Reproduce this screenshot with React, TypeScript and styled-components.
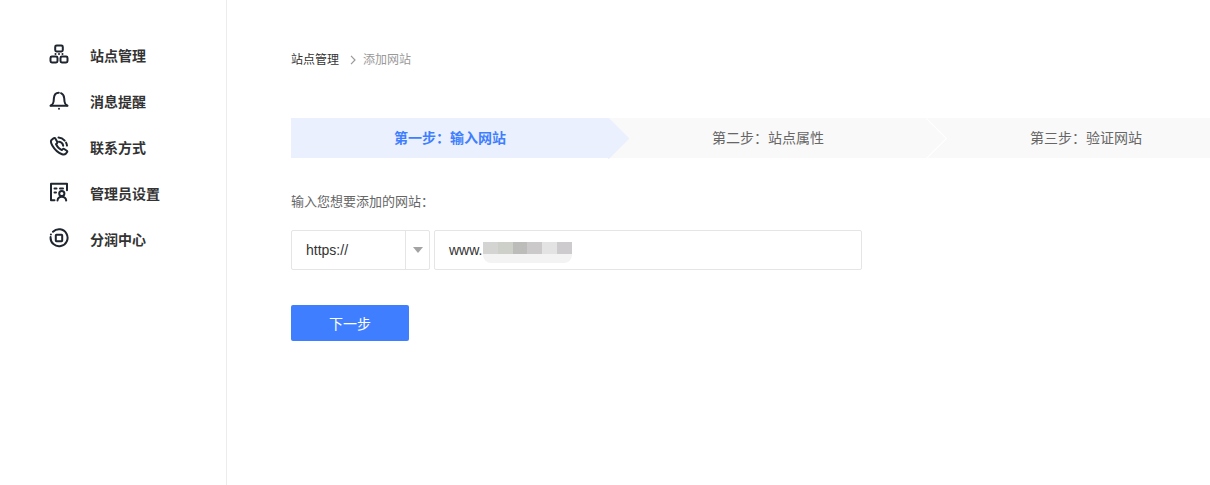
import React from 'react'
import styled, { createGlobalStyle } from 'styled-components'

// constants
const FONT = '"Liberation Sans", "Noto Sans CJK SC", sans-serif'
const BLUE = '#3f7fff'
const BLUR_CELLS = ['#d4d4d2', '#cdd0c8', '#bcbcba', '#cbc9ca', '#e3e3e3', '#cdcbcd']

// styled components
const GlobalStyle = createGlobalStyle`
  html, body {
    margin: 0;
    padding: 0;
    background: #fff;
    overflow: hidden;
  }
  * {
    box-sizing: border-box;
  }
`

const Page = styled.div`
  display: flex;
  width: 1210px;
  height: 485px;
  overflow: hidden;
  font-family: ${FONT};
`

const Sidebar = styled.nav`
  flex: 0 0 227px;
  display: flex;
  flex-direction: column;
  padding-top: 32px;
  padding-left: 49px;
  border-right: 1px solid #ececec;
`

const MenuItem = styled.div`
  height: 46px;
  display: flex;
  align-items: center;
  gap: 21px;
  color: #333;
  font-size: 14px;
  font-weight: 700;
`

const MenuIcon = styled.svg`
  flex-shrink: 0;
  width: 20px;
  height: 20px;
  margin-top: -2px;
  fill: none;
  stroke: #1f2630;
  stroke-width: 2;
  stroke-linecap: round;
  stroke-linejoin: round;
`

const Main = styled.main`
  flex: 1;
  min-width: 0;
  padding-left: 64px;
  padding-top: 51px;
`

const Breadcrumb = styled.div`
  height: 18px;
  display: flex;
  align-items: center;
  font-size: 12px;
  line-height: 18px;
  color: #333;
`

const Chevron = styled.svg`
  width: 8px;
  height: 10px;
  margin: 0 6px 0 10px;
  fill: none;
  stroke: #9a9a9a;
  stroke-width: 1.2;
`

const Current = styled.span`
  color: #999;
`

const Steps = styled.div`
  display: flex;
  margin-top: 49px;
  width: 954px;
`

const Step = styled.div<{ $active?: boolean }>`
  position: relative;
  flex: 0 0 318px;
  height: 40px;
  display: flex;
  align-items: center;
  justify-content: center;
  padding-bottom: 2px;
  font-size: 14px;
  font-weight: ${({ $active }) => ($active ? 700 : 400)};
  color: ${({ $active }) => ($active ? BLUE : '#666')};
  background: ${({ $active }) => ($active ? '#eaf0fd' : '#f9f9f9')};

  &::after {
    content: '';
    position: absolute;
    z-index: 1;
    top: 5.86px;
    right: -14.14px;
    width: 28.28px;
    height: 28.28px;
    transform: rotate(45deg);
    background: ${({ $active }) => ($active ? '#eaf0fd' : '#f9f9f9')};
    border-top: 1px solid ${({ $active }) => ($active ? '#eaf0fd' : '#fff')};
    border-right: 1px solid ${({ $active }) => ($active ? '#eaf0fd' : '#fff')};
  }
`

const FieldLabel = styled.div`
  margin-top: 35px;
  font-size: 13px;
  line-height: 18px;
  color: #666;
`

const FieldRow = styled.div`
  display: flex;
  gap: 4px;
  margin-top: 19px;
`

const SelectBox = styled.div`
  width: 139px;
  height: 40px;
  display: flex;
  border: 1px solid #e5e5e5;
  border-radius: 2px;
  font-size: 14px;
  color: #333;
`

const SelectValue = styled.div`
  flex: 1;
  display: flex;
  align-items: center;
  padding-left: 14px;
`

const SelectArrow = styled.div`
  flex: 0 0 24px;
  display: flex;
  align-items: center;
  justify-content: center;
  border-left: 1px solid #e5e5e5;

  &::before {
    content: '';
    border-style: solid;
    border-width: 6px 5px 0;
    border-color: #a3a3a3 transparent transparent;
  }
`

const UrlBox = styled.div`
  position: relative;
  width: 428px;
  height: 40px;
  display: flex;
  align-items: center;
  padding-left: 14px;
  border: 1px solid #e5e5e5;
  border-radius: 2px;
  font-size: 14px;
  color: #333;
`

const BlurMask = styled.div`
  position: absolute;
  left: 48px;
  top: 11px;
  width: 89px;
  height: 21px;
  border-radius: 0 0 8px 8px;
  background: #f3f3f3;
`

const BlurRow = styled.div`
  display: flex;
  height: 12px;
`

const BlurCell = styled.div<{ $color: string }>`
  flex: 1;
  background: ${({ $color }) => $color};
`

const NextButton = styled.button`
  display: block;
  width: 118px;
  height: 36px;
  margin-top: 35px;
  padding: 0;
  border: 0;
  border-radius: 2px;
  background: ${BLUE};
  color: #fff;
  font-family: inherit;
  font-size: 14px;
`

const menu = [
  {
    label: '站点管理',
    icon: (
      <>
        <rect x="6.2" y="1.5" width="7.6" height="6" rx="1.4" />
        <rect x="1.5" y="12.5" width="7" height="6" rx="1.4" />
        <rect x="11.5" y="12.5" width="7" height="6" rx="1.4" />
        <path d="M6.5 10h.01M10 10h.01M13.5 10h.01" />
      </>
    ),
  },
  {
    label: '消息提醒',
    icon: (
      <>
        <path d="M2 15.5c1.6-.8 2.4-2 2.6-4l.3-3.4C5.2 5 7.2 2.8 9.8 2.8" />
        <path d="M12 3.2c1.9.8 3 2.6 3.2 4.9l.3 3.4c.2 2 1 3.2 2.5 4" />
        <path d="M1.5 15.7h17" />
        <path d="M10 18.8h.01" />
      </>
    ),
  },
  {
    label: '联系方式',
    icon: (
      <>
        <path d="M4.6 2.2 2.5 4c-.9.9-.6 3 .8 5.4 2.5 4.3 6 7.4 9.8 8.8 1.6.6 2.8.4 3.6-.4l1.3-1.6c.4-.5.3-1-.2-1.4l-2.6-1.8c-.5-.3-1-.3-1.4.1l-1 1c-2.4-1-4.6-3.3-5.8-5.9l1-1c.4-.4.4-.9.2-1.4L6.3 2.4c-.4-.6-1.1-.7-1.7-.2Z" />
        <path d="M10 5.8c2.2.2 3.8 1.8 4.2 4" />
        <path d="M9.5 1.6c4.4.3 7.8 3.5 8.5 8" strokeDasharray="7 2.5" />
      </>
    ),
  },
  {
    label: '管理员设置',
    icon: (
      <>
        <path d="M5.5 18.3H2V1.8h16v6.4" />
        <path d="M5.5 6.5h2M5.5 10.5h1.5M11 6.5h3" />
        <circle cx="12.8" cy="11.5" r="2.6" />
        <path d="M8.5 18.5c.3-2.4 2-3.7 4.3-3.7s4 1.3 4.4 3.7" />
      </>
    ),
  },
  {
    label: '分润中心',
    icon: (
      <>
        <path d="M4 3.8A8.5 8.5 0 1 1 1.6 9" />
        <path d="M1.9 6.5h.01" />
        <rect x="6.8" y="6.8" width="6.4" height="6.4" rx=".6" />
      </>
    ),
  },
]

const App = () => (
  <Page>
    <GlobalStyle />
    <Sidebar>
      {menu.map(item => (
        <MenuItem key={item.label}>
          <MenuIcon viewBox="0 0 20 20">{item.icon}</MenuIcon>
          {item.label}
        </MenuItem>
      ))}
    </Sidebar>
    <Main>
      <Breadcrumb>
        站点管理
        <Chevron viewBox="0 0 8 10">
          <path d="M2 .8 6 5 2 9.2" />
        </Chevron>
        <Current>添加网站</Current>
      </Breadcrumb>
      <Steps>
        <Step $active>第一步：输入网站</Step>
        <Step>第二步：站点属性</Step>
        <Step>第三步：验证网站</Step>
      </Steps>
      <FieldLabel>输入您想要添加的网站：</FieldLabel>
      <FieldRow>
        <SelectBox>
          <SelectValue>https://</SelectValue>
          <SelectArrow />
        </SelectBox>
        <UrlBox>
          www.
          <BlurMask>
            <BlurRow>
              {BLUR_CELLS.map((color, i) => (
                <BlurCell key={i} $color={color} />
              ))}
            </BlurRow>
          </BlurMask>
        </UrlBox>
      </FieldRow>
      <NextButton>下一步</NextButton>
    </Main>
  </Page>
)

export default App
